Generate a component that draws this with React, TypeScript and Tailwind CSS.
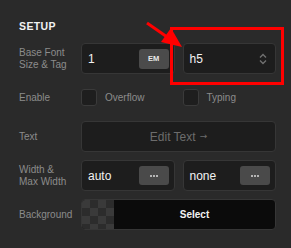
import React from "react";

const label = "w-[62px] shrink-0 text-[10px] leading-[12px] text-[#8c8c8c]";
const box = "h-full rounded-[4px] border border-[#363636] bg-[#1d1d1d]";

function Dots() {
  return (
    <div className="flex h-[19px] w-[30px] items-center justify-center gap-px rounded-[3px] bg-[#4a4a4a]">
      <span className="h-[2px] w-[2px] bg-[#b5b5b5]" />
      <span className="h-[2px] w-[2px] bg-[#b5b5b5]" />
      <span className="h-[2px] w-[2px] bg-[#b5b5b5]" />
    </div>
  );
}

function ValueBox({ value, children }: { value: string; children?: React.ReactNode }) {
  return (
    <div className={`${box} flex items-center justify-between pl-[6px] pr-[5px]`}>
      <span className="text-[12px] text-[#f2f2f2]">{value}</span>
      {children}
    </div>
  );
}

function Check({ text }: { text: string }) {
  return (
    <div className="flex items-center gap-2">
      <div className="h-[17px] w-[16px] rounded-[3px] border border-[#3a3a3a] bg-[#1e1e1e]" />
      <span className="text-[10px] text-[#8c8c8c]">{text}</span>
    </div>
  );
}

export default function App() {
  const checker = Array.from({ length: 16 }, (_, i) => (Math.floor(i / 4) + i) % 2 === 0);

  return (
    <div className="relative h-[248px] w-[291px] overflow-hidden bg-[#2a2a2a] font-['Liberation_Sans',Arial,sans-serif]">
      <div className="pl-[19px] pr-[15px] pt-[20px]">
        <h3 className="text-[10.5px] font-bold leading-[12px] tracking-[0.4px] text-[#f2f2f2]">SETUP</h3>

        <div className="mt-[11px] flex flex-col gap-2">
          {/* font size + tag */}
          <div className="flex h-[31px] items-center">
            <div className={label}>
              Base Font
              <br />
              Size &amp; Tag
            </div>
            <div className="grid h-full flex-1 grid-cols-2 gap-2">
              <ValueBox value="1">
                <div className="flex h-[20px] w-[30px] items-center justify-center rounded-[3px] bg-[#4b4b4b] text-[7.5px] font-bold text-[#e8e8e8]">
                  EM
                </div>
              </ValueBox>
              <ValueBox value="h5">
                <svg width="8" height="12" viewBox="0 0 8 12" fill="none" stroke="#707070" strokeWidth="1.4" className="mr-[3px]">
                  <path d="M1 4.5 L4 1.5 L7 4.5" />
                  <path d="M1 7.5 L4 10.5 L7 7.5" />
                </svg>
              </ValueBox>
            </div>
          </div>

          {/* enable */}
          <div className="flex h-[31px] items-center">
            <div className={label}>Enable</div>
            <div className="grid flex-1 grid-cols-2 gap-2">
              <Check text="Overflow" />
              <Check text="Typing" />
            </div>
          </div>

          {/* text */}
          <div className="flex h-[31px] items-center">
            <div className={label}>Text</div>
            <div className={`${box} flex flex-1 items-center justify-center gap-[4px] text-[12px] text-[#6c6c6c]`}>
              <span>Edit Text</span>
              <span className="font-['DejaVu_Sans',sans-serif] text-[9px]">→</span>
            </div>
          </div>

          {/* width */}
          <div className="flex h-[31px] items-center">
            <div className={label}>
              Width &amp;
              <br />
              Max Width
            </div>
            <div className="grid h-full flex-1 grid-cols-2 gap-2">
              <ValueBox value="auto">
                <Dots />
              </ValueBox>
              <ValueBox value="none">
                <Dots />
              </ValueBox>
            </div>
          </div>

          {/* background */}
          <div className="flex h-[31px] items-center">
            <div className={label}>Background</div>
            <div className="flex h-full flex-1 overflow-hidden rounded-[4px] border border-[#363636] bg-[#0b0b0b]">
              <div className="grid h-full w-[32px] shrink-0 grid-cols-4 content-start">
                {checker.map((light, i) => (
                  <div key={i} className={light ? "h-[8px] bg-[#3a3a3a]" : "h-[8px] bg-[#2c2c2c]"} />
                ))}
              </div>
              <div className="flex flex-1 items-center justify-center text-[10px] font-bold text-[#f2f2f2]">Select</div>
            </div>
          </div>
        </div>
      </div>

      {/* annotation */}
      <div className="pointer-events-none absolute left-[170px] top-[27px] h-[58px] w-[114px] border-[3px] border-[#ff0000]" />
      <svg className="pointer-events-none absolute left-0 top-0" width="291" height="248">
        <line x1="147" y1="23" x2="170" y2="39" stroke="#ff0000" strokeWidth="3" />
        <polygon points="182,47 161,42 171,28" fill="#ff0000" />
      </svg>
    </div>
  );
}
